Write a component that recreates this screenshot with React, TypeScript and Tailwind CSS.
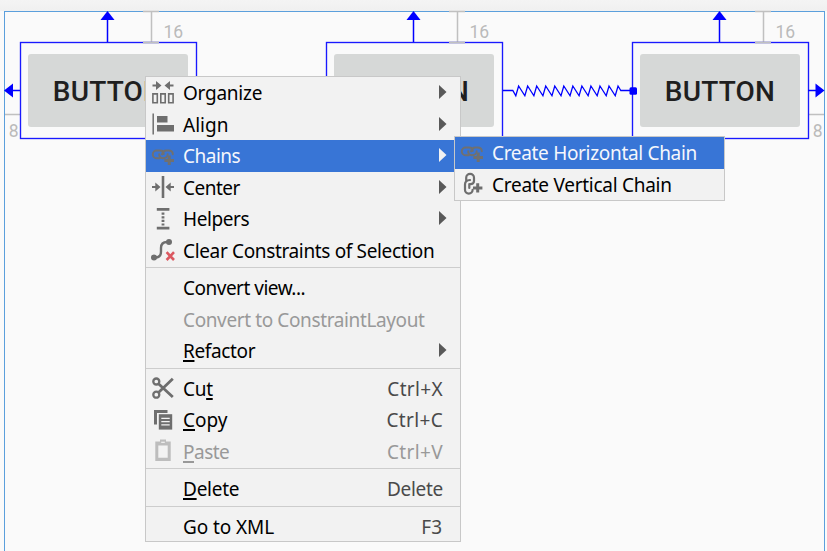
import type { ReactNode } from "react";

const GRAY = "#6e6e6e";
const BLUE = "#0000ff";

function Glyph({ children }: { children?: ReactNode }) {
  return (
    <svg width="24" height="24" viewBox="0 0 24 24" fill="none" stroke={GRAY} strokeWidth="2" className="shrink-0">
      {children}
    </svg>
  );
}

const OrganizeIcon = () => (
  <Glyph>
    <path d="M1.5 4.5h5M22.5 4.5h-5" strokeWidth="2.2" />
    <path d="M5 0L10.5 4.5L5 9zM19 0L13.5 4.5L19 9z" fill={GRAY} stroke="none" />
    <path d="M1.9 12.9h4.4v8.8h-4.4zM9.8 12.9h4.4v8.8h-4.4zM17.7 12.9h4.4v8.8h-4.4z" strokeWidth="1.6" />
  </Glyph>
);
const AlignIcon = () => (
  <Glyph>
    <path d="M2.2 1.5v21" strokeWidth="1.5" />
    <path d="M6 4h10.5v6.5H6zM6 13h17v6.5H6z" fill={GRAY} stroke="none" />
  </Glyph>
);
const ChainHIcon = () => (
  <Glyph>
    <g stroke="#707070" strokeLinecap="round">
      <path d="M8.6 14.2H5.6a3.8 3.8 0 0 1 0-7.6H9.2c2 0 3.5 1.3 3.5 3.3" />
      <path d="M8.2 10.3c0 2.3 1.5 3.9 3.7 3.9M11 10.4c.7-2.7 2-3.8 4.2-3.8h2.4c2.4 0 4.2 1.5 4.2 3.7" />
      <path d="M12 14.2c2.5 0 4.7-1.8 4.7-4" />
    </g>
    <path d="M18.2 11.5v9.6M13.4 16.5h9.6" stroke="#707070" strokeWidth="3" />
  </Glyph>
);
const ChainVIcon = () => (
  <Glyph>
    <g strokeLinecap="round" strokeWidth="2.2">
      <path d="M6.2 8.2V5.7a3.9 3.9 0 0 1 7.8 0V9c0 2-1.5 3.2-3.5 3.2" />
      <path d="M10 8c-3 .2-5 1.7-5 4.5v5.3a3.8 3.8 0 0 0 7.6 0" />
      <path d="M9.3 12v4" />
    </g>
    <path d="M17.7 11.2v9.4M13 15.9h9.4" strokeWidth="3" />
  </Glyph>
);
const CenterIcon = () => (
  <Glyph>
    <path d="M12 1v22" strokeWidth="2.6" />
    <path d="M1 12h5M23 12h-5" strokeWidth="2.2" />
    <path d="M4.3 7.5L9.5 12L4.3 16.5zM19.7 7.5L14.5 12L19.7 16.5z" fill={GRAY} stroke="none" />
  </Glyph>
);
const HelpersIcon = () => (
  <Glyph>
    <path d="M5.8 2.3h12.6M5.8 21.2h12.6" strokeWidth="2.8" />
    <path d="M12 5.6v13" strokeDasharray="2.2 1.4" strokeWidth="2.8" />
  </Glyph>
);
const ClearIcon = () => (
  <Glyph>
    <path d="M3 19.5h1.5c4 0 5.5-2 5.5-6V10c0-4.3 2-6 6-6h2" strokeWidth="2.4" />
    <circle cx="3" cy="19.5" r="3" fill={GRAY} stroke="none" />
    <circle cx="18" cy="4" r="3" fill={GRAY} stroke="none" />
    <path d="M15.6 14.2l7.4 7.8M23 14.2l-7.4 7.8" stroke="#db5860" strokeWidth="2.6" />
  </Glyph>
);
const CutIcon = () => (
  <Glyph>
    <circle cx="5.3" cy="5.5" r="3" strokeWidth="2.3" />
    <circle cx="5.3" cy="18.7" r="3" strokeWidth="2.3" />
    <path d="M7.5 7.7L21.8 21M7.5 16.5L21.8 2.8" strokeWidth="2.8" />
  </Glyph>
);
const CopyIcon = () => (
  <Glyph>
    <path d="M3 2h13.5v3H6v11.5H3z" fill={GRAY} stroke="none" />
    <path d="M7.8 6.2h13.4V21.6H7.8z" fill={GRAY} stroke="none" />
    <path d="M10.3 10.4h8.4M10.3 13.6h8.4M10.3 16.8h8.4" stroke="#f2f2f2" strokeWidth="1.3" />
  </Glyph>
);
const PasteIcon = () => (
  <Glyph>
    <path d="M4.3 2.5H9V.5h6v2h4.7V22H4.3z M7.3 6.5v12.3h9.4V6.5z" fill="#bdbdbd" fillRule="evenodd" stroke="none" />
    <path d="M10.2 3.3h3.6" stroke="#f2f2f2" strokeWidth="1.2" />
  </Glyph>
);

type ItemProps = {
  icon?: ReactNode;
  label: string;
  /* Index of the underlined access key inside the label. */
  mnemonic?: number;
  shortcut?: string;
  shortcutTracking?: string;
  arrow?: boolean;
  active?: boolean;
  disabled?: boolean;
  tracking?: string;
};

function Item({
  icon,
  label,
  mnemonic = -1,
  shortcut,
  shortcutTracking = "",
  arrow,
  active,
  disabled,
  tracking = "",
}: ItemProps) {
  const tone = active ? "bg-[#3875d6] text-[#f5f7fc]" : disabled ? "text-[#999999]" : "text-black";
  return (
    <div className={`flex h-[31.5px] items-center pr-[17px] pl-[5px] ${tone}`}>
      <div className="flex w-8 shrink-0 items-center">{icon}</div>
      <span className={`pt-[2px] ${tracking}`}>
        {mnemonic < 0 ? (
          label
        ) : (
          <>
            {label.slice(0, mnemonic)}
            <span className="underline decoration-[1.5px] underline-offset-[2px]">{label[mnemonic]}</span>
            {label.slice(mnemonic + 1)}
          </>
        )}
      </span>
      {shortcut && (
        <span className={`ml-auto pt-[2px] ${shortcutTracking} ${disabled ? "text-[#999999]" : "text-[#4a4a4a]"}`}>
          {shortcut}
        </span>
      )}
      {arrow && (
        <svg width="8" height="14" viewBox="0 0 8 14" className="mr-[-4px] mb-px ml-auto">
          <path d="M0 0L7.5 7L0 14z" fill={active ? "#f2f2f2" : "#595959"} />
        </svg>
      )}
    </div>
  );
}

function Separator() {
  return (
    <div className="h-1.5 pt-px">
      <div className="h-px bg-[#cdcdcd]" />
    </div>
  );
}

const widgets = [
  { left: "left-[20px]", text: "BUTTON" },
  { left: "left-[326px]", text: "BUTTON" },
  { left: "left-[632px]", text: "BUTTON" },
];

const zigzag = Array.from({ length: 12 }, (_, k) => `L${515.8 + 9.04 * k} 95.8L${518.6 + 9.04 * k} 86`).join("");

function Constraints() {
  return (
    <svg width="827" height="551" viewBox="0 0 827 551" fill="none" className="absolute top-0 left-0 font-['Roboto',sans-serif]">
      {[0, 306, 612].map((dx) => (
        <g key={dx} transform={`translate(${dx} 0)`}>
          <path d="M151.5 12v30M143 11.5h16M143 42.5h16" stroke="#c0c0c0" strokeWidth="1.5" />
          <path d="M107.5 18v24" stroke={BLUE} strokeWidth="1.5" />
          <path d="M107.5 11L114.5 20H100.5z" fill={BLUE} />
          <text x="163.5" y="38" fontSize="17.5" fill="#bababa">16</text>
        </g>
      ))}
      <path d="M5 114.5h15M809 114.5h15" stroke="#c0c0c0" strokeWidth="1.4" />
      <text x="8.8" y="137" fontSize="17.5" fill="#bababa">8</text>
      <text x="812.8" y="137" fontSize="17.5" fill="#bababa">8</text>
      <path d="M12 90.5h8M808 90.5h8" stroke={BLUE} strokeWidth="1.3" />
      <path d="M4 90.5L13 83.5V97.5zM824.5 90.5L815.5 83.5V97.5z" fill={BLUE} />
      <path d={`M503 90.5H512.8${zigzag}L620.8 90.5H632`} stroke={BLUE} strokeWidth="1.3" />
      <rect x="629.5" y="87.3" width="7.5" height="7.5" rx="1.5" fill={BLUE} />
      {/* Selection outlines */}
      {[0, 306, 612].map((dx) => (
        <rect key={dx} x={20.5 + dx} y="42.5" width="176" height="96" stroke={BLUE} strokeWidth="1.35" strokeOpacity="0.9" />
      ))}
      {[151, 457, 763].map((cx) => (
        <path key={cx} d={`M${cx - 8} 42.5h16`} stroke="#c0c0c0" strokeWidth="1.6" />
      ))}
    </svg>
  );
}

export default function App() {
  return (
    <div className="relative flex h-[551px] w-[827px] flex-col overflow-hidden bg-[#fafafa] font-['Noto_Sans','Open_Sans',sans-serif] text-[19px] leading-none whitespace-nowrap">
      <div className="h-[11px] bg-gradient-to-b from-[#f4f4f4] to-[#f0f0f0]" />
      <div className="mr-[2px] ml-1 grow border border-b-0 border-[#5b9fdc]" />

      {widgets.map((w) => (
        <div key={w.left} className={`absolute top-[42px] h-[97px] w-[177px] pt-px pl-px ${w.left}`}>
          <div className="mt-[11px] ml-[7px] flex h-[73px] w-[160px] items-center justify-center rounded-[3px] bg-[#d6d8d7] pt-[2px] font-['Roboto',sans-serif] text-[28px] font-medium tracking-[0.2px] text-[#1f1f1f]">
            {w.text}
          </div>
        </div>
      ))}
      <Constraints />

      <div className="absolute top-[76px] left-[145px] h-[466px] w-[316px] border border-[#c8c8c8] bg-[#f2f2f2]">
        <Item icon={<OrganizeIcon />} label="Organize" tracking="tracking-[-0.25px]" arrow />
        <Item icon={<AlignIcon />} label="Align" arrow />
        <Item icon={<ChainHIcon />} label="Chains" tracking="tracking-[-0.5px]" arrow active />
        <Item icon={<CenterIcon />} label="Center" tracking="tracking-[-0.5px]" arrow />
        <Item icon={<HelpersIcon />} label="Helpers" tracking="tracking-[-0.4px]" arrow />
        <Item icon={<ClearIcon />} label="Clear Constraints of Selection" tracking="tracking-[-0.35px]" />
        <Separator />
        <Item label="Convert view..." tracking="tracking-[-0.5px]" />
        <Item label="Convert to ConstraintLayout" tracking="tracking-[-0.38px]" disabled />
        <Item label="Refactor" mnemonic={0} tracking="tracking-[-0.35px]" arrow />
        <Separator />
        <Item icon={<CutIcon />} label="Cut" mnemonic={2} tracking="tracking-[-0.3px]" shortcut="Ctrl+X" shortcutTracking="tracking-[0.35px]" />
        <Item icon={<CopyIcon />} label="Copy" mnemonic={0} shortcut="Ctrl+C" shortcutTracking="tracking-[0.35px]" />
        <Item icon={<PasteIcon />} label="Paste" mnemonic={0} tracking="tracking-[-0.5px]" shortcut="Ctrl+V" shortcutTracking="tracking-[0.35px]" disabled />
        <Separator />
        <Item label="Delete" mnemonic={0} tracking="tracking-[-0.25px]" shortcut="Delete" shortcutTracking="tracking-[-0.3px]" />
        <Separator />
        <Item label="Go to XML" tracking="tracking-[-0.1px]" shortcut="F3" shortcutTracking="pr-px" />
      </div>

      <div className="absolute top-[136px] left-[454px] h-[65px] w-[271px] border border-[#c8c8c8] bg-[#f2f2f2]">
        <Item icon={<ChainHIcon />} label="Create Horizontal Chain" tracking="tracking-[-0.32px]" active />
        <Item icon={<ChainVIcon />} label="Create Vertical Chain" tracking="tracking-[-0.27px]" />
      </div>
    </div>
  );
}
